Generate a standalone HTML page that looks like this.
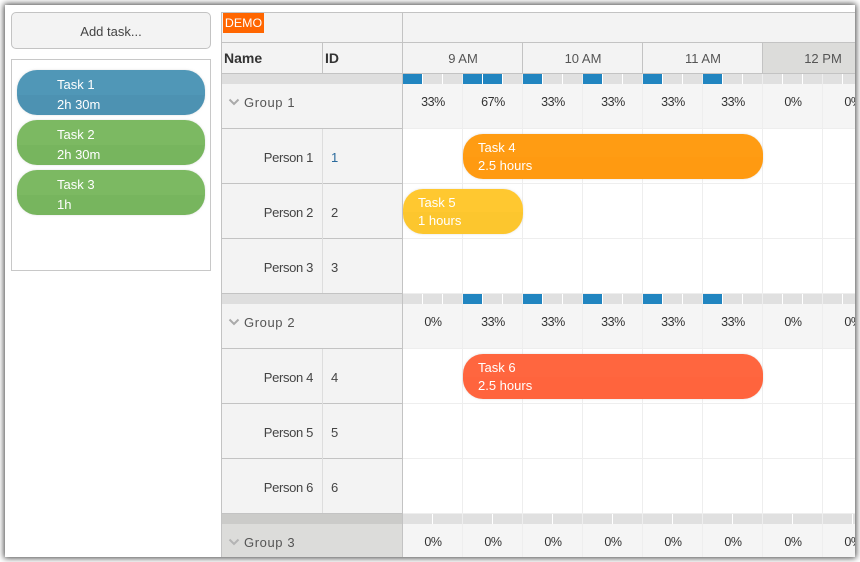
<!DOCTYPE html>
<html><head><meta charset="utf-8"><title>Scheduler</title>
<style>
html,body{margin:0;padding:0;width:860px;height:562px;overflow:hidden;background:#fff}
body{font-family:"Liberation Sans",sans-serif;font-size:13px;color:#333}
#frame{position:absolute;left:5px;top:5px;width:850px;height:552px;background:#fff;box-shadow:0 0 6px 1px #444}
#clip{position:absolute;left:0;top:0;width:850px;height:552px;overflow:hidden}
#in{position:absolute;left:-5px;top:-5px;width:860px;height:562px}
#in div{position:absolute;box-sizing:border-box;white-space:nowrap}
#in svg{position:absolute}
.l{background:#c3c3c3}
.f{background:#eee}
.t{line-height:18px;height:18px}
.p{width:60px;text-align:center;line-height:18px;height:18px;color:#333;font-size:12.5px;letter-spacing:-.4px}
.h{width:120px;text-align:center;line-height:18px;height:18px;color:#555}
.n{width:100px;left:213px;text-align:right;line-height:18px;height:18px;color:#444;letter-spacing:-.35px}
.i{left:331px;line-height:18px;height:18px;color:#444}
.g{left:244px;line-height:18px;height:18px;color:#555;letter-spacing:.6px}
.bar{left:403px;width:460px;height:10px;background:repeating-linear-gradient(90deg,#e0e0e0 0 19px,#fff 19px 20px,#e0e0e0 20px 39px,#fff 39px 40px,#e0e0e0 40px 59px,#eee 59px 60px)}
.bar3{left:403px;width:460px;height:10px;background:repeating-linear-gradient(90deg,#e0e0e0 0 29px,#fff 29px 30px,#e0e0e0 30px 59px,#eee 59px 60px)}
.b{background:#2185c0;width:19px;height:10px}
.task{border-radius:20px;box-shadow:0 0 2px rgba(190,190,190,.5);height:45px;color:#fff}
.task .a,.task .c{line-height:18px;height:18px;color:#fff}
</style></head><body>
<div id="frame"><div id="clip"><div id="in">

<!-- left panel -->
<div style="left:11px;top:12px;width:200px;height:37px;background:#f3f3f3;border:1px solid #c3c3c3;border-radius:5px;text-align:center;line-height:37px;color:#444">Add task...</div>
<div style="left:11px;top:59px;width:200px;height:212px;background:#fff;border:1px solid #c8c8c8"></div>

<div class="task" style="left:17px;top:70px;width:188px;background:linear-gradient(#5097b7 0 25px,#4d92b2 25px)"><div class="a" style="left:40px;top:6px">Task 1</div><div class="c" style="left:40px;top:26px">2h 30m</div></div>
<div class="task" style="left:17px;top:120px;width:188px;background:linear-gradient(#7cb962 0 25px,#77b55e 25px)"><div class="a" style="left:40px;top:6px">Task 2</div><div class="c" style="left:40px;top:26px">2h 30m</div></div>
<div class="task" style="left:17px;top:170px;width:188px;background:linear-gradient(#7cb962 0 25px,#77b55e 25px)"><div class="a" style="left:40px;top:6px">Task 3</div><div class="c" style="left:40px;top:26px">1h</div></div>

<!-- left column backgrounds -->
<div style="left:222px;top:13px;width:180px;height:60px;background:#f3f3f3"></div>
<div style="left:403px;top:13px;width:460px;height:60px;background:#f3f3f3"></div>
<div style="left:763px;top:43px;width:100px;height:30px;background:#dcdcda"></div>

<div style="left:222px;top:74px;width:180px;height:10px;background:#dedede"></div>
<div style="left:222px;top:84px;width:180px;height:44px;background:#f3f3f3"></div>
<div style="left:222px;top:129px;width:180px;height:164px;background:#f3f3f3"></div>
<div style="left:222px;top:294px;width:180px;height:10px;background:#dedede"></div>
<div style="left:222px;top:304px;width:180px;height:44px;background:#f3f3f3"></div>
<div style="left:222px;top:349px;width:180px;height:164px;background:#f3f3f3"></div>
<div style="left:222px;top:514px;width:180px;height:10px;background:#cbcbc9"></div>
<div style="left:222px;top:524px;width:180px;height:34px;background:#dcdcda"></div>

<!-- timeline group rows -->
<div style="left:403px;top:84px;width:460px;height:44px;background:#f5f5f5"></div>
<div style="left:403px;top:304px;width:460px;height:44px;background:#f5f5f5"></div>
<div style="left:403px;top:524px;width:460px;height:34px;background:#f5f5f5"></div>

<!-- faint vertical grid -->
<div class="f" style="left:462px;top:84px;width:1px;height:210px"></div>
<div class="f" style="left:522px;top:84px;width:1px;height:210px"></div>
<div class="f" style="left:582px;top:84px;width:1px;height:210px"></div>
<div class="f" style="left:642px;top:84px;width:1px;height:210px"></div>
<div class="f" style="left:702px;top:84px;width:1px;height:210px"></div>
<div class="f" style="left:762px;top:84px;width:1px;height:210px"></div>
<div class="f" style="left:822px;top:84px;width:1px;height:210px"></div>
<div class="f" style="left:462px;top:304px;width:1px;height:210px"></div>
<div class="f" style="left:522px;top:304px;width:1px;height:210px"></div>
<div class="f" style="left:582px;top:304px;width:1px;height:210px"></div>
<div class="f" style="left:642px;top:304px;width:1px;height:210px"></div>
<div class="f" style="left:702px;top:304px;width:1px;height:210px"></div>
<div class="f" style="left:762px;top:304px;width:1px;height:210px"></div>
<div class="f" style="left:822px;top:304px;width:1px;height:210px"></div>
<div class="f" style="left:462px;top:524px;width:1px;height:34px"></div>
<div class="f" style="left:522px;top:524px;width:1px;height:34px"></div>
<div class="f" style="left:582px;top:524px;width:1px;height:34px"></div>
<div class="f" style="left:642px;top:524px;width:1px;height:34px"></div>
<div class="f" style="left:702px;top:524px;width:1px;height:34px"></div>
<div class="f" style="left:762px;top:524px;width:1px;height:34px"></div>
<div class="f" style="left:822px;top:524px;width:1px;height:34px"></div>

<!-- faint horizontal grid -->
<div class="f" style="left:403px;top:128px;width:460px;height:1px"></div>
<div class="f" style="left:403px;top:183px;width:460px;height:1px"></div>
<div class="f" style="left:403px;top:238px;width:460px;height:1px"></div>
<div class="f" style="left:403px;top:293px;width:460px;height:1px"></div>
<div class="f" style="left:403px;top:348px;width:460px;height:1px"></div>
<div class="f" style="left:403px;top:403px;width:460px;height:1px"></div>
<div class="f" style="left:403px;top:458px;width:460px;height:1px"></div>
<div class="f" style="left:403px;top:513px;width:460px;height:1px"></div>

<!-- utilisation bars -->
<div class="bar" style="top:74px"></div>
<div class="b" style="left:403px;top:74px"></div>
<div class="b" style="left:463px;top:74px"></div>
<div class="b" style="left:483px;top:74px"></div>
<div class="b" style="left:523px;top:74px"></div>
<div class="b" style="left:583px;top:74px"></div>
<div class="b" style="left:643px;top:74px"></div>
<div class="b" style="left:703px;top:74px"></div>
<div class="bar" style="top:294px"></div>
<div class="b" style="left:463px;top:294px"></div>
<div class="b" style="left:523px;top:294px"></div>
<div class="b" style="left:583px;top:294px"></div>
<div class="b" style="left:643px;top:294px"></div>
<div class="b" style="left:703px;top:294px"></div>
<div class="bar3" style="top:514px"></div>

<!-- strong lines -->
<div class="l" style="left:221px;top:12px;width:1px;height:546px"></div>
<div class="l" style="left:221px;top:12px;width:642px;height:1px"></div>
<div class="l" style="left:402px;top:12px;width:1px;height:546px"></div>
<div class="l" style="left:221px;top:42px;width:642px;height:1px"></div>
<div class="l" style="left:221px;top:73px;width:642px;height:1px"></div>
<div class="l" style="left:322px;top:43px;width:1px;height:30px"></div>
<div class="l" style="left:522px;top:43px;width:1px;height:30px"></div>
<div class="l" style="left:642px;top:43px;width:1px;height:30px"></div>
<div class="l" style="left:762px;top:43px;width:1px;height:30px"></div>
<div class="l" style="left:221px;top:128px;width:181px;height:1px"></div>
<div class="l" style="left:221px;top:183px;width:181px;height:1px"></div>
<div class="l" style="left:221px;top:238px;width:181px;height:1px"></div>
<div class="l" style="left:221px;top:293px;width:181px;height:1px"></div>
<div class="l" style="left:221px;top:348px;width:181px;height:1px"></div>
<div class="l" style="left:221px;top:403px;width:181px;height:1px"></div>
<div class="l" style="left:221px;top:458px;width:181px;height:1px"></div>
<div class="l" style="left:221px;top:513px;width:181px;height:1px"></div>
<div style="left:322px;top:129px;width:1px;height:164px;background:#ddd"></div>
<div style="left:322px;top:349px;width:1px;height:164px;background:#ddd"></div>

<!-- header text -->
<div style="left:223px;top:13px;width:41px;height:20px;background:#ff6600;color:#fff;text-align:center;line-height:21px;font-size:12.4px">DEMO</div>
<div class="t" style="left:224px;top:49px;font-weight:bold;font-size:14px;color:#333">Name</div>
<div class="t" style="left:325px;top:49px;font-weight:bold;font-size:14px;color:#333">ID</div>
<div class="h" style="left:403px;top:50px">9 AM</div>
<div class="h" style="left:523px;top:50px">10 AM</div>
<div class="h" style="left:643px;top:50px">11 AM</div>
<div class="h" style="left:763px;top:50px">12 PM</div>

<!-- groups -->
<svg style="left:228px;top:98px" width="12" height="9" viewBox="0 0 12 9"><polyline points="1.5,1.5 6,6 10.5,1.5" fill="none" stroke="#aaa" stroke-width="2"/></svg>
<div class="g" style="top:94px">Group 1</div>
<svg style="left:228px;top:318px" width="12" height="9" viewBox="0 0 12 9"><polyline points="1.5,1.5 6,6 10.5,1.5" fill="none" stroke="#aaa" stroke-width="2"/></svg>
<div class="g" style="top:314px">Group 2</div>
<svg style="left:228px;top:538px" width="12" height="9" viewBox="0 0 12 9"><polyline points="1.5,1.5 6,6 10.5,1.5" fill="none" stroke="#b4b4b4" stroke-width="2"/></svg>
<div class="g" style="top:534px">Group 3</div>

<!-- people -->
<div class="n" style="top:149px">Person 1</div><div class="i" style="top:149px;color:#2a6a9c">1</div>
<div class="n" style="top:204px">Person 2</div><div class="i" style="top:204px">2</div>
<div class="n" style="top:259px">Person 3</div><div class="i" style="top:259px">3</div>
<div class="n" style="top:369px">Person 4</div><div class="i" style="top:369px">4</div>
<div class="n" style="top:424px">Person 5</div><div class="i" style="top:424px">5</div>
<div class="n" style="top:479px">Person 6</div><div class="i" style="top:479px">6</div>

<!-- percents -->
<div class="p" style="left:403px;top:93px">33%</div>
<div class="p" style="left:463px;top:93px">67%</div>
<div class="p" style="left:523px;top:93px">33%</div>
<div class="p" style="left:583px;top:93px">33%</div>
<div class="p" style="left:643px;top:93px">33%</div>
<div class="p" style="left:703px;top:93px">33%</div>
<div class="p" style="left:763px;top:93px">0%</div>
<div class="p" style="left:823px;top:93px">0%</div>
<div class="p" style="left:403px;top:313px">0%</div>
<div class="p" style="left:463px;top:313px">33%</div>
<div class="p" style="left:523px;top:313px">33%</div>
<div class="p" style="left:583px;top:313px">33%</div>
<div class="p" style="left:643px;top:313px">33%</div>
<div class="p" style="left:703px;top:313px">33%</div>
<div class="p" style="left:763px;top:313px">0%</div>
<div class="p" style="left:823px;top:313px">0%</div>
<div class="p" style="left:403px;top:533px">0%</div>
<div class="p" style="left:463px;top:533px">0%</div>
<div class="p" style="left:523px;top:533px">0%</div>
<div class="p" style="left:583px;top:533px">0%</div>
<div class="p" style="left:643px;top:533px">0%</div>
<div class="p" style="left:703px;top:533px">0%</div>
<div class="p" style="left:763px;top:533px">0%</div>
<div class="p" style="left:823px;top:533px">0%</div>

<!-- tasks -->
<div class="task" style="left:463px;top:134px;width:300px;background:linear-gradient(#ff9c13 0 23px,#ff9a11 23px)"><div class="a" style="left:15px;top:5px">Task 4</div><div class="c" style="left:15px;top:23px">2.5 hours</div></div>
<div class="task" style="left:403px;top:189px;width:120px;background:linear-gradient(#ffc830 0 23px,#fcc62e 23px)"><div class="a" style="left:15px;top:5px">Task 5</div><div class="c" style="left:15px;top:23px">1 hours</div></div>
<div class="task" style="left:463px;top:354px;width:300px;background:linear-gradient(#ff663f 0 23px,#ff643d 23px)"><div class="a" style="left:15px;top:5px">Task 6</div><div class="c" style="left:15px;top:23px">2.5 hours</div></div>

</div></div></div>
</body></html>
